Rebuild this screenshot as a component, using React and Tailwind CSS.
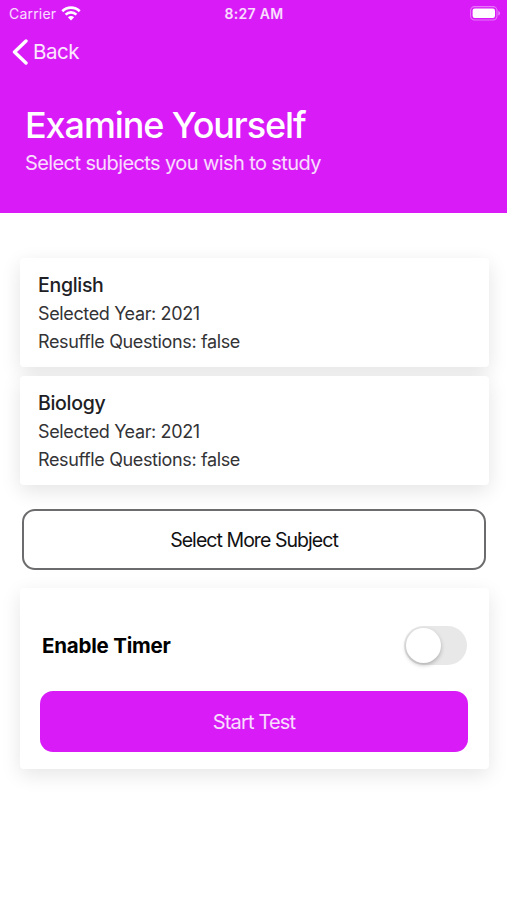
import { useState } from 'react';

const subjects = [
  { name: 'English', year: 2021, reshuffle: false },
  { name: 'Biology', year: 2021, reshuffle: false },
];

const WifiIcon = () => (
  <svg width="20" height="15" viewBox="0 0 20 15" fill="none" stroke="white" strokeWidth="2.6">
    <path d="M1.3 5.2C6.2 0.4 13.8 0.4 18.7 5.2" />
    <path d="M4.6 8.6C7.7 5.6 12.3 5.6 15.4 8.6" />
    <path d="M10 14.4L6.9 11.3C8.6 9.7 11.4 9.7 13.1 11.3Z" fill="white" stroke="none" />
  </svg>
);

const BatteryIcon = () => (
  <svg width="31" height="15" viewBox="0 0 31 15" fill="none">
    <rect x="0.6" y="0.6" width="26.4" height="13.4" rx="4" stroke="white" strokeOpacity="0.4" strokeWidth="1.1" />
    <rect x="2.6" y="2.6" width="22.4" height="9.4" rx="2.2" fill="white" />
    <path d="M28.4 5V9.6C30.4 8.8 30.4 5.8 28.4 5Z" fill="white" fillOpacity="0.5" />
  </svg>
);

const StatusBar = () => (
  <div className="grid h-7 grid-cols-3 items-center pb-[2px] pl-[9px] pr-[6px] text-[14px] text-white/85">
    <div className="flex items-center gap-[5px]">
      <span className="tracking-[0.2px]">Carrier</span>
      <WifiIcon />
    </div>
    <span className="pr-[2px] text-center text-[14px] font-semibold tracking-[0.3px]">8:27 AM</span>
    <div className="flex justify-end">
      <BatteryIcon />
    </div>
  </div>
);

const Header = () => (
  <header className="h-[213px] bg-[#d81bf7] text-white">
    <StatusBar />
    <button className="flex h-12 items-center gap-[5px] pl-3 text-[20.5px] tracking-[-0.5px] text-white/90">
      <svg width="16" height="26" viewBox="0 0 16 26" fill="none" stroke="white" strokeWidth="3.4" strokeLinecap="round" strokeLinejoin="round">
        <path d="M14 2L2.5 13L14 24" />
      </svg>
      Back
    </button>
    <div className="px-[25px] pt-[27px]">
      <h1 className="text-[36px] font-medium leading-[44px] tracking-[-1.1px]">Examine Yourself</h1>
      <p className="mt-1 text-[20px] leading-6 tracking-[-0.6px] text-white/85">Select subjects you wish to study</p>
    </div>
  </header>
);

const SubjectCard = ({ name, year, reshuffle }) => (
  <div className="h-[109px] rounded-[4px] bg-white px-[18px] pt-[13px] text-[18px] leading-7 tracking-[-0.37px] text-[#333336] shadow-[0_6px_20px_rgba(0,0,0,0.11)]">
    <h2 className="mb-px text-[19.5px] font-medium tracking-[-0.3px] text-[#202024]">{name}</h2>
    <p>Selected Year: {year}</p>
    <p>Resuffle Questions: {String(reshuffle)}</p>
  </div>
);

const Toggle = ({ on, onChange }) => (
  <button
    role="switch"
    aria-checked={on}
    aria-label="Enable Timer"
    onClick={() => onChange(!on)}
    className={`flex h-[39px] w-[63px] items-center rounded-full p-[2px] ${on ? 'justify-end bg-[#d81bf7]' : 'bg-[#e8e8e9]'}`}
  >
    <span className="size-[35px] rounded-full bg-white shadow-[0_2px_4px_rgba(0,0,0,0.25)]" />
  </button>
);

export default function App() {
  const [timer, setTimer] = useState(false);

  return (
    <div className="h-[900px] overflow-hidden bg-white font-['Inter','Liberation_Sans',sans-serif]">
      <Header />
      <main className="pl-5 pr-[18px] pt-[45px]">
        <div className="flex flex-col gap-[9px]">
          {subjects.map((subject) => (
            <SubjectCard key={subject.name} {...subject} />
          ))}
        </div>

        <div className="pl-[2px] pr-[3px] pt-6">
          <button className="h-[61px] w-full rounded-[13px] border-2 border-[#6c6c6e] bg-white pt-[2px] text-[19.5px] tracking-[-0.95px] text-[#111113]">
            Select More Subject
          </button>
        </div>

        <section className="mt-[18px] h-[181px] rounded-[4px] bg-white pl-5 pr-[21px] pt-[38px] shadow-[0_6px_20px_rgba(0,0,0,0.1)]">
          <div className="flex h-[39px] items-center justify-between pl-[2px] pr-px">
            <span className="pt-[2px] text-[20.5px] font-bold tracking-[-0.2px] text-black">Enable Timer</span>
            <Toggle on={timer} onChange={setTimer} />
          </div>
          <button className="mt-[26px] h-[61px] w-full rounded-[13px] bg-[#d81bf7] pt-px text-[20px] tracking-[-0.85px] text-white/85">
            Start Test
          </button>
        </section>
      </main>
    </div>
  );
}
